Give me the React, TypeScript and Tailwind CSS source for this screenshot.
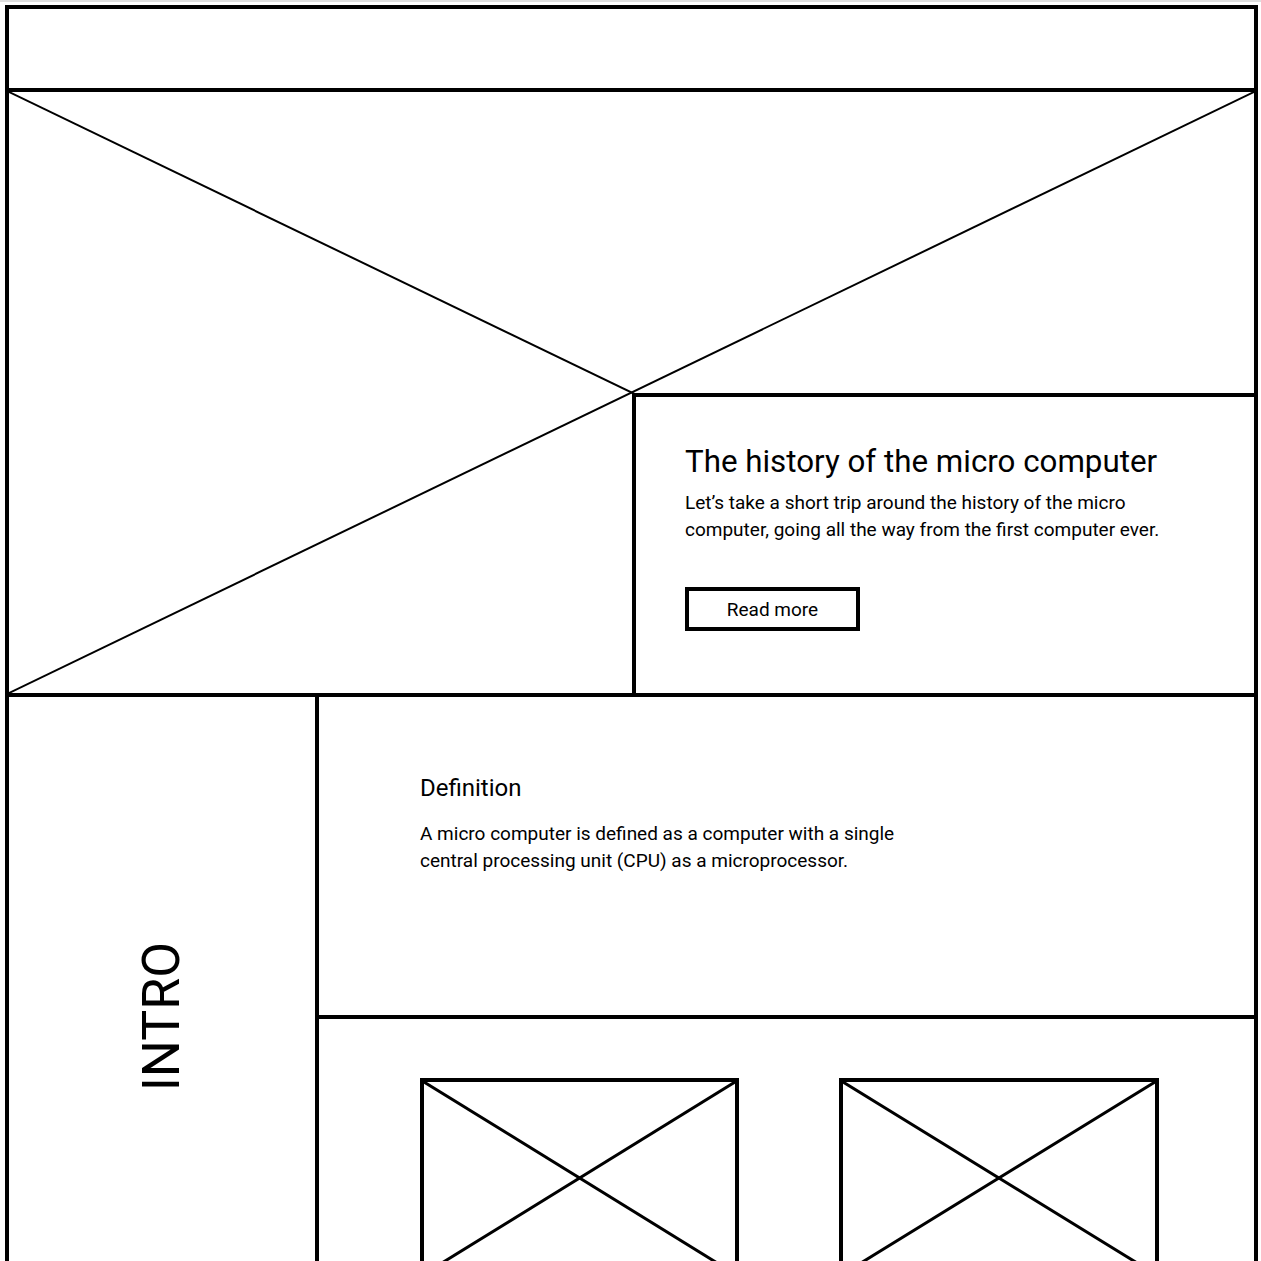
import React from "react";

function XBox({ className }: { className: string }) {
  return (
    <div className={`relative border-4 border-black ${className}`}>
      <svg className="absolute inset-0 h-full w-full" viewBox="0 0 100 100" preserveAspectRatio="none">
        <line x1="0" y1="0" x2="100" y2="100" stroke="black" strokeWidth="3" vectorEffect="non-scaling-stroke" />
        <line x1="0" y1="100" x2="100" y2="0" stroke="black" strokeWidth="3" vectorEffect="non-scaling-stroke" />
      </svg>
    </div>
  );
}

export default function App() {
  return (
    <div
      className="min-h-screen bg-white border-t-2 border-[#dedede] pt-[3px] pl-[5px] text-black"
      style={{ fontFamily: "Roboto, 'Noto Sans', sans-serif" }}
    >
      <div className="w-[1253px] border-4 border-black flex flex-col">
        <header className="h-[83px] border-b-4 border-black" />

        <section className="relative h-[605px] border-b-4 border-black flex items-end justify-end">
          <svg className="absolute left-0 top-0" width="1245" height="601" viewBox="0 0 1245 601">
            <line x1="0" y1="0" x2="1245" y2="601" stroke="black" strokeWidth="2" />
            <line x1="0" y1="601" x2="1245" y2="0" stroke="black" strokeWidth="2" />
          </svg>
          <div className="relative w-[622px] h-[300px] border-l-4 border-t-4 border-black bg-white pl-[49px] pt-[45px]">
            <h1 className="text-[31.3px] leading-[40px] font-normal">The history of the micro computer</h1>
            <p className="mt-[7px] text-[19px] leading-[27px]">
              Let’s take a short trip around the history of the micro
              <br />
              computer, going all the way from the first computer ever.
            </p>
            <button className="mt-[44px] w-[175px] h-[44px] border-4 border-black flex items-center justify-center text-[19px] leading-[27px]">
              Read more
            </button>
          </div>
        </section>

        <section className="flex">
          <div className="w-[310px] shrink-0 border-r-4 border-black flex items-center justify-center">
            <span className="[writing-mode:vertical-rl] rotate-180 text-[52px] leading-[52px] tracking-normal">INTRO</span>
          </div>
          <div className="flex-1 flex flex-col">
            <div className="h-[322px] border-b-4 border-black pl-[101px] pt-[77px]">
              <h2 className="text-[24px] leading-[28px]">Definition</h2>
              <p className="mt-[18px] text-[19px] leading-[27px]">
                A micro computer is defined as a computer with a single
                <br />
                central processing unit (CPU) as a microprocessor.
              </p>
            </div>
            <div className="pl-[101px] pt-[59px] pb-[59px] flex gap-[100px]">
              <XBox className="w-[319px] h-[200px]" />
              <XBox className="w-[320px] h-[200px]" />
            </div>
          </div>
        </section>
      </div>
    </div>
  );
}
